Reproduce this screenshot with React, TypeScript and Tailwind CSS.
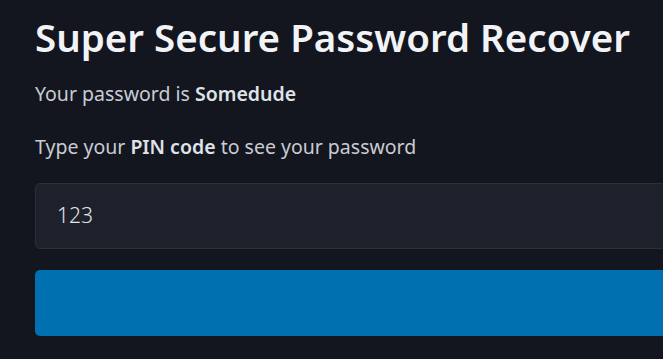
export default function App() {
  return (
    <div className="w-[663px] h-[359px] overflow-hidden bg-[#13161e] text-[#c9ccd4]" style={{ fontFamily: '"Noto Sans", sans-serif' }}>
      <div className="w-[900px] pl-[35px] pt-[10px]">
        <h1 className="text-[38.5px] leading-[54px] font-semibold text-[#f1f3f6]">Super Secure Password Recover</h1>
        <p className="mt-[16px] text-[19.5px] leading-[28px]">
          Your password is <b className="font-semibold text-[#dfe2e8]">Somedude</b>
        </p>
        <p className="mt-[25px] text-[19.5px] leading-[28px]">
          Type your <b className="font-semibold text-[#dfe2e8]">PIN code</b> to see your password
        </p>
        <div className="mt-[22px] h-[66px] rounded-[5px] border border-[#2b2f3a] bg-[#1e212b] flex items-center px-[21px] text-[21px] text-[#e0e3e8] font-light">
          123
        </div>
        <div className="mt-[21px] h-[66px] rounded-[5px] bg-[#0070b0]"></div>
      </div>
    </div>
  );
}
